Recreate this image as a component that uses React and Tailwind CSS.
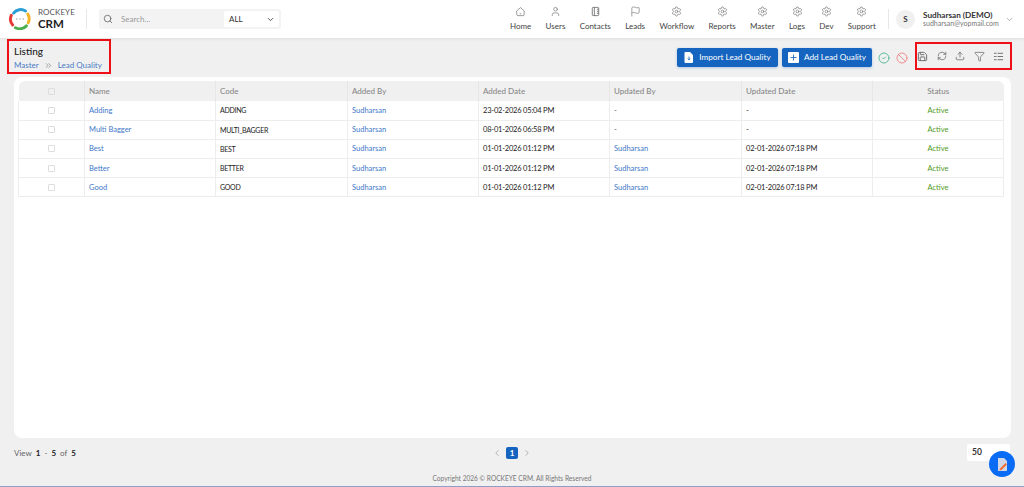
import React from "react";
import { User, Flag, Settings, ChevronDown, ChevronLeft, ChevronRight, ChevronsRight, Search, CircleCheck, Ban, Save, RefreshCw, Upload, Funnel, Plus } from "lucide-react";

const HomeIcon = (p) => (
  <svg {...p} viewBox="0 0 24 24" fill="none" stroke="currentColor" strokeWidth="1.4" strokeLinejoin="round" strokeLinecap="round">
    <path d="M4 10.5 12 3.5l8 7V19a2 2 0 0 1-2 2H6a2 2 0 0 1-2-2z" />
    <path d="M11 17h2" />
  </svg>
);
const BookIcon = (p) => (
  <svg {...p} viewBox="0 0 24 24" fill="none" stroke="currentColor" strokeWidth="1.8" strokeLinejoin="round">
    <rect x="5" y="3" width="14" height="18" rx="2" />
    <path d="M9.5 3v18M15 7h4M15 11.5h4M15 16h4" />
  </svg>
);
const ListIcon = (p) => (
  <svg {...p} viewBox="0 0 24 24" fill="none" stroke="currentColor" strokeWidth="2" strokeLinecap="round">
    <path d="M11 5h10M11 12h10M11 19h10" />
    <path d="M3 5h4M3 12h4M3 19h4" strokeDasharray="1.5 1.5" />
  </svg>
);
const Logo = () => (
  <svg width="22" height="22" viewBox="0 0 24 24" fill="none" strokeWidth="3.2" className="shrink-0">
    <path d="M5 5.5A10 10 0 0 1 18 3.2" stroke="#2a9fd6" strokeLinecap="round" />
    <path d="M20.5 6.5A10 10 0 0 1 21 16" stroke="#f5b324" strokeLinecap="round" />
    <path d="M19 19.5A10 10 0 0 1 7 21.5" stroke="#4caf50" strokeLinecap="round" />
    <path d="M4 18.5A10 10 0 0 1 2.5 8" stroke="#e53935" strokeLinecap="round" />
    <circle cx="8.5" cy="12" r="0.9" fill="#aaa" />
    <circle cx="12" cy="12" r="0.9" fill="#aaa" />
    <circle cx="15.5" cy="12" r="0.9" fill="#aaa" />
  </svg>
);

const nav = [
  ["Home", HomeIcon], ["Users", User], ["Contacts", BookIcon], ["Leads", Flag], ["Workflow", Settings],
  ["Reports", Settings], ["Master", Settings], ["Logs", Settings], ["Dev", Settings], ["Support", Settings],
];

const cols = ["w-[66px]", "w-[131px]", "w-[132px]", "w-[131px]", "w-[131px]", "w-[132px]", "w-[131px]", "w-[131px]"];
const heads = ["Name", "Code", "Added By", "Added Date", "Updated By", "Updated Date"];
const rows = [
  ["Adding", "ADDING", "23-02-2026 05:04 PM", "-", "-"],
  ["Multi Bagger", "MULTI_BAGGER", "08-01-2026 06:58 PM", "-", "-"],
  ["Best", "BEST", "01-01-2026 01:12 PM", "Sudharsan", "02-01-2026 07:18 PM"],
  ["Better", "BETTER", "01-01-2026 01:12 PM", "Sudharsan", "02-01-2026 07:18 PM"],
  ["Good", "GOOD", "01-01-2026 01:12 PM", "Sudharsan", "02-01-2026 07:18 PM"],
];

export default function App() {
  return (
    <div className="relative h-[487px] w-[1024px] overflow-hidden bg-[#f0f0f0] flex flex-col font-['Lato','Liberation_Sans',sans-serif] text-[#333]">
      <header className="h-[38px] shrink-0 bg-white shadow-[0_1px_3px_rgba(0,0,0,0.08)] flex items-center pl-[9px] z-10">
        <Logo />
        <div className="ml-[7px] w-[48px] shrink-0 leading-none">
          <div className="text-[8px] text-[#555] tracking-[0.1px]">ROCKEYE</div>
          <div className="text-[11.5px] font-bold text-[#222] mt-[2px]">CRM</div>
        </div>
        <div className="h-[20px] w-px shrink-0 bg-[#e8e8e8]" />
        <div className="ml-[12px] h-[20px] w-[182px] shrink-0 bg-[#f3f3f3] rounded-[3px] flex items-center pl-[4px] pr-[2px]">
          <Search size={10} className="text-[#666]" />
          <span className="ml-[8px] text-[8px] text-[#999]">Search...</span>
          <div className="ml-auto h-[16px] w-[55px] bg-white rounded-[2px] flex items-center justify-between pl-[5px] pr-[4px]">
            <span className="text-[8px] text-[#333]">ALL</span>
            <ChevronDown size={9} className="text-[#333]" strokeWidth={2.2} />
          </div>
        </div>
        <nav className="ml-[229px] w-[366px] shrink-0 flex items-center justify-between">
          {nav.map(([label, Icon]) => (
            <div key={label} className="flex flex-col items-center gap-[4px] text-[#666]">
              <Icon width={11} height={11} strokeWidth={1.3} />
              <span className="text-[8px] leading-[11px] whitespace-nowrap text-[#444]">{label}</span>
            </div>
          ))}
        </nav>
        <div className="ml-[12px] h-[20px] w-px shrink-0 bg-[#e8e8e8]" />
        <div className="ml-[7px] size-[19px] shrink-0 rounded-full bg-[#f0f0f0] flex items-center justify-center text-[8px] font-bold text-[#333]">S</div>
        <div className="ml-[8px] w-[76px] shrink-0 leading-none">
          <div className="text-[8.2px] font-bold text-[#333] whitespace-nowrap">Sudharsan (DEMO)</div>
          <div className="text-[7px] text-[#777] mt-[1px] whitespace-nowrap">sudharsan@yopmail.com</div>
        </div>
        <ChevronDown size={9} className="ml-[6px] shrink-0 text-[#999]" />
      </header>

      <div className="h-[39px] shrink-0 flex items-start pl-[7px] pr-[12px]">
        <div className="w-[104px] h-[35px] mt-[1px] border-2 border-[#ee0f17] pl-[5px] pt-[4px]">
          <div className="text-[10px] leading-[13px] font-medium text-[#222]">Listing</div>
          <div className="flex items-center text-[8px] leading-[12px] text-[#4a7cc4] mt-[1px]">
            Master
            <ChevronsRight size={9} className="mx-[5px] text-[#888]" />
            Lead Quality
          </div>
        </div>
        <button className="ml-auto mt-[10px] h-[19px] w-[101px] rounded-[2px] bg-[#1565c0] text-white text-[8.2px] flex items-center justify-center gap-[5px] shadow-[0_1px_3px_rgba(21,101,192,0.3)]">
          <svg width="10" height="11" viewBox="0 0 10 11" fill="#fff">
            <path d="M1.5 0H6l3 3v7a1 1 0 0 1-1 1H1.5a1 1 0 0 1-1-1V1a1 1 0 0 1 1-1z" />
            <path d="M5 4.5v3M3.8 6.5 5 8l1.2-1.5" stroke="#1565c0" strokeWidth="0.8" fill="none" />
          </svg>
          Import Lead Quality
        </button>
        <button className="ml-[4px] mt-[10px] h-[19px] w-[90px] rounded-[2px] bg-[#1565c0] text-white text-[8.2px] flex items-center justify-center gap-[5px] shadow-[0_1px_3px_rgba(21,101,192,0.3)]">
          <span className="size-[11px] bg-white rounded-[1px] flex items-center justify-center">
            <Plus size={9} className="text-[#1565c0]" strokeWidth={2.2} />
          </span>
          Add Lead Quality
        </button>
        <CircleCheck size={12} className="ml-[6px] mt-[14px] text-[#3fb489]" strokeWidth={1.7} />
        <Ban size={12} className="ml-[6px] mt-[14px] text-[#f27c7c]" strokeWidth={1.7} />
        <div className="ml-[7px] mt-[4px] w-[97px] h-[28px] border-2 border-[#ee0f17] flex items-center justify-between pl-[0px] pr-[6px] text-[#666]">
          <Save size={11} strokeWidth={2} />
          <RefreshCw size={10} strokeWidth={1.8} />
          <Upload size={10} strokeWidth={1.8} />
          <Funnel size={11} strokeWidth={1.6} />
          <ListIcon width={11} height={11} />
        </div>
      </div>

      <main className="mx-[14px] w-[997px] h-[361px] shrink-0 bg-white rounded-lg pt-[4px] pl-[4px]">
        <table className="table-fixed border-collapse w-[985px] text-[7.5px]">
          <colgroup>{cols.map((c, i) => <col key={i} className={c} />)}</colgroup>
          <thead>
            <tr className="h-[20px] bg-[#f0f0f0] text-[#888] text-[8px]">
              <th className="border-r border-[#e6e6e6] rounded-tl-md font-normal">
                <span className="block mx-auto size-[7px] border border-[#ddd] rounded-[1px]" />
              </th>
              {heads.map((h) => (
                <th key={h} className="border-r border-[#e6e6e6] pl-[4px] text-left font-medium">{h}</th>
              ))}
              <th className="rounded-tr-md text-center font-medium">Status</th>
            </tr>
          </thead>
          <tbody>
            {rows.map((r) => (
              <tr key={r[0]} className="h-[19.2px] border-b border-[#ededed]">
                <td className="border-l border-r border-[#ededed]">
                  <span className="block mx-auto size-[7px] border border-[#ddd] rounded-[1px]" />
                </td>
                <td className="border-r border-[#ededed] pl-[4px] text-[#3f78c9]">{r[0]}</td>
                <td className="border-r border-[#ededed] pl-[4px] text-[#222] text-[7px] tracking-[-0.3px]">{r[1]}</td>
                <td className="border-r border-[#ededed] pl-[4px] text-[#3f78c9]">Sudharsan</td>
                <td className="border-r border-[#ededed] pl-[4px] text-[#222] tracking-[-0.2px]">{r[2]}</td>
                <td className={"border-r border-[#ededed] pl-[4px] " + (r[3] === "-" ? "text-[#555]" : "text-[#3f78c9]")}>{r[3]}</td>
                <td className="border-r border-[#ededed] pl-[4px] text-[#222] tracking-[-0.2px]">{r[4]}</td>
                <td className="border-r border-[#ededed] text-center text-[#4f9a23]">Active</td>
              </tr>
            ))}
          </tbody>
        </table>
      </main>

      <div className="h-[23px] mt-[3px] shrink-0 flex items-center pl-[14px] pr-[14px] text-[8px]">
        <div className="text-[#666] w-[453px] shrink-0 flex gap-[4px] whitespace-nowrap">
          View <b className="text-[#222]">1</b> - <b className="text-[#222]">5</b> of <b className="text-[#222]">5</b>
        </div>
        <div className="flex items-center ml-[25px]">
          <ChevronLeft size={10} className="text-[#aaa]" />
          <span className="mx-[4px] size-[12px] rounded-[2px] bg-[#1565c0] text-white font-bold text-[8px] flex items-center justify-center">1</span>
          <ChevronRight size={10} className="text-[#aaa]" />
        </div>
        <div className="ml-auto h-[17px] w-[43px] bg-white rounded-[2px] pl-[5px] flex items-center font-bold text-[8.5px] text-[#333]">50</div>
      </div>

      <footer className="mt-auto h-[18px] pt-[3px] flex items-center justify-center text-[6.6px] text-[#777] border-b border-[#8aa0c8] shrink-0">
        Copyright 2026 © ROCKEYE CRM. All Rights Reserved
      </footer>

      <button className="absolute left-[989px] top-[451px] size-[26px] rounded-full bg-[#0a6cf5] flex items-center justify-center z-20">
        <svg width="11" height="13" viewBox="0 0 11 13">
          <path d="M1 0h6l3 3v9a1 1 0 0 1-1 1H1z" fill="#cfd6e6" />
          <path d="M3 10.5 8.5 5l1.5 1.5L4.5 12l-2 .5z" fill="#f0703a" />
        </svg>
      </button>
    </div>
  );
}
